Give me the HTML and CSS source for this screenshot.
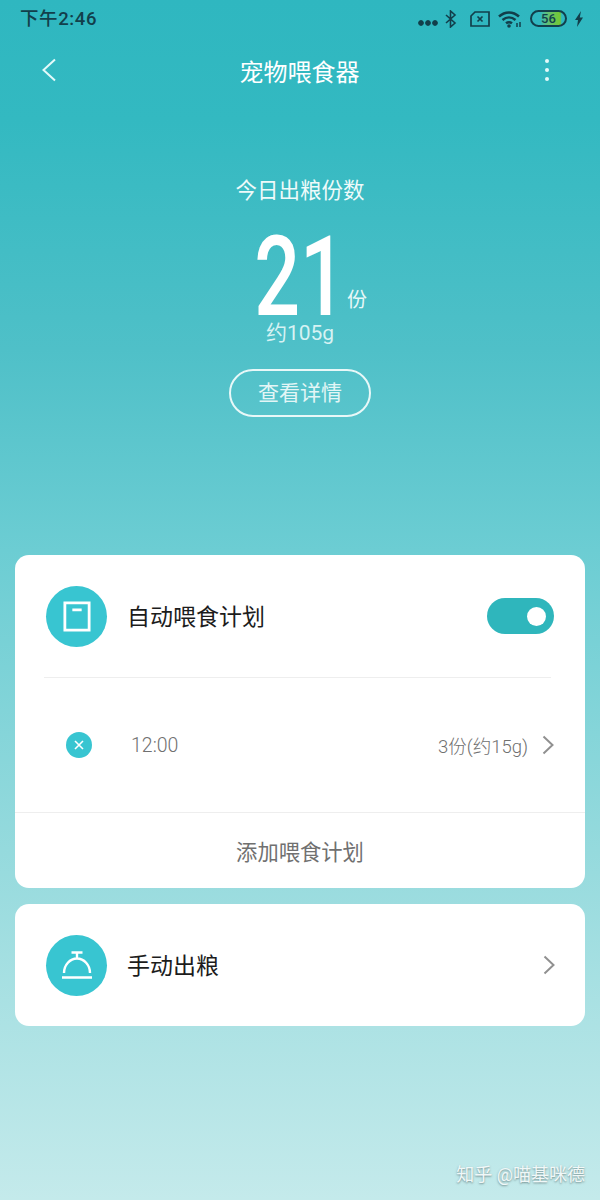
FILE: index.html
```html
<!DOCTYPE html>
<html>
<head>
<meta charset="UTF-8">
<title>宠物喂食器</title>
<link rel="stylesheet" href="styles.css">
</head>
<body>
	<div class="page">
		<div class="status">
			<span class="status-time">下午2:46</span>
			<div class="status-icons">
				<svg class="ic-dots" viewBox="0 0 20 6"><circle cx="3" cy="3" r="2.400"/><circle cx="10" cy="3" r="2.400"/><circle cx="17" cy="3" r="2.400"/></svg>
				<svg class="ic-bt" viewBox="0 0 12 18"><path d="M1 5l9 8-4.500 4V1L10 5l-9 8" fill="none" stroke-width="1.600"/></svg>
				<svg class="ic-sim" viewBox="0 0 20 16"><path d="M5 1h14v14H1V5z M7.500 5.500l5 5 M12.500 5.500l-5 5" fill="none" stroke-width="1.700"/></svg>
				<svg class="ic-wifi" viewBox="0 0 24 18"><path d="M1 6.500C7 1 15 1 21 6.500M4.500 10C8.500 6.500 13.500 6.500 17.500 10M8 13.300c2-1.500 4-1.500 6 0" fill="none" stroke-width="2.500"/><circle cx="11" cy="16" r="1.800" stroke="none"/><path d="M19 13v4M22 12v5" fill="none" stroke-width="1.500"/></svg>
				<div class="battery"><span class="battery-num">56</span></div>
				<svg class="ic-bolt" viewBox="0 0 10 16"><path d="M7 0L1 9h3l-1 7 6-9.500H5.800z" stroke="none"/></svg>
			</div>
		</div>

		<div class="nav">
			<svg class="nav-back" viewBox="0 0 16 24"><path d="M14 1.500L2.500 12 14 22.500"/></svg>
			<h1 class="nav-title">宠物喂食器</h1>
			<div class="nav-more"><i></i><i></i><i></i></div>
		</div>

		<div class="hero">
			<p class="hero-title">今日出粮份数</p>
			<div class="hero-count">
				<span class="hero-num">21</span>
				<span class="hero-unit">份</span>
			</div>
			<p class="hero-weight">约105g</p>
			<a class="hero-btn">查看详情</a>
		</div>

		<div class="card">
			<div class="row-main row-plan">
				<div class="round-icon">
					<svg viewBox="0 0 30 32"><path d="M2 1.500h26v29H2z M10 9h10" fill="none" stroke="#fff" stroke-width="3"/></svg>
				</div>
				<span class="row-title">自动喂食计划</span>
				<div class="switch"><div class="switch-knob"></div></div>
			</div>
			<div class="row-item">
				<div class="del-icon">
					<svg viewBox="0 0 12 12"><path d="M2 2l8 8M10 2l-8 8" stroke="#fff" stroke-width="1.600" fill="none"/></svg>
				</div>
				<span class="item-time">12:00</span>
				<span class="item-amount">3份(约15g)</span>
				<svg class="chevron" viewBox="0 0 12 20"><path d="M1.500 1.500L10.500 10 1.500 18.500"/></svg>
			</div>
			<div class="row-add">添加喂食计划</div>
		</div>

		<div class="card card-manual">
			<div class="row-main">
				<div class="round-icon">
					<svg class="ic-bell" viewBox="0 0 32 28"><path d="M10.500 1.500h11M16 1.500v6M3 22C3 14 9 7.500 16 7.500S29 14 29 22M1 26.500h30" fill="none" stroke="#fff" stroke-width="2.400"/></svg>
				</div>
				<span class="row-title">手动出粮</span>
				<svg class="chevron chevron-manual" viewBox="0 0 12 20"><path d="M1.500 1.500L10.500 10 1.500 18.500"/></svg>
			</div>
		</div>

		<div class="watermark">知乎 @喵基咪德</div>
	</div>
</body>
</html>
```

FILE: styles.css
```css
* {
	box-sizing: border-box;
}

html, body {
	margin: 0;
	padding: 0;
}

body {
	font-family: Roboto, "Noto Sans CJK SC", sans-serif;
}

.page {
	position: relative;
	width: 600px;
	height: 1200px;
	overflow: hidden;
	padding: 0 15px;
	background: linear-gradient(180deg, #2fb7c0 0, #33b9c1 120px, #4fc0c8 350px, #6ccdd3 550px, #95dadd 850px, #c4eaeb 1200px);
}

/*状态栏*/
.status {
	display: flex;
	justify-content: space-between;
	align-items: center;
	height: 34px;
	margin: 0 -15px;
	padding: 0 16px 0 20px;
	color: #123f4b;
}

.status-time {
	font-size: 18.500px;
	font-weight: 500;
	letter-spacing: .6px;
}

.status-icons {
	display: flex;
	align-items: center;
	padding-top: 3px;
}

.status-icons svg {
	display: block;
	fill: #123f4b;
	stroke: #123f4b;
}

.ic-dots {
	width: 20px;
	height: 6px;
	margin: 8px 7px 0 0;
}

.ic-bt {
	width: 12px;
	height: 18px;
	margin-right: 13px;
}

.ic-sim {
	width: 20px;
	height: 16px;
	margin-right: 8px;
}

.ic-wifi {
	width: 24px;
	height: 18px;
	margin-right: 8px;
}

.battery {
	position: relative;
	width: 37px;
	height: 17px;
	border: 2px solid #123f4b;
	border-radius: 9px;
	margin-right: 7px;
	background: linear-gradient(90deg, transparent 25%, #5fbf7a 45%, #74c832 85%, transparent 90%);
}

.battery-num {
	position: absolute;
	left: 0;
	right: 0;
	top: -2px;
	text-align: center;
	font-size: 13px;
	line-height: 17px;
	font-weight: 500;
}

.ic-bolt {
	width: 10px;
	height: 16px;
}

/*标题栏*/
.nav {
	display: flex;
	justify-content: space-between;
	align-items: center;
	height: 72px;
	margin: 0 -15px;
	padding: 0 51px 0 41px;
	color: #fff;
}

.nav-back {
	width: 16px;
	height: 24px;
	fill: none;
	stroke: #e4fafa;
	stroke-width: 2;
}

.nav-title {
	margin: 0 0 0 -3px;
	font-size: 24px;
	font-weight: 400;
}

.nav-more i {
	display: block;
	width: 4px;
	height: 4px;
	margin: 5px 0;
	border-radius: 50%;
	background: #e4fafa;
}

/*今日份数*/
.hero {
	display: flex;
	flex-direction: column;
	align-items: center;
	height: 449px;
	padding-top: 70px;
	color: #fff;
}

.hero p {
	margin: 0;
}

.hero-title {
	font-size: 21.500px;
	line-height: 30px;
	color: #eefafa;
}

.hero-count {
	display: grid;
	grid-template-columns: 1fr 80px 1fr;
	align-items: end;
	width: 100%;
	height: 90px;
	margin-top: 26px;
}

.hero-num {
	grid-column: 2;
	display: flex;
	justify-content: center;
	font-size: 112px;
	font-weight: 500;
	line-height: 90px;
	transform: scaleX(.72);
}

.hero-unit {
	grid-column: 3;
	margin: 0 0 10px 7px;
	font-size: 20px;
	line-height: 24px;
	color: #e8f8f8;
}

.hero-weight {
	margin-top: -1px !important;
	font-size: 21px;
	line-height: 24px;
	color: #d6f2f3;
}

.hero-btn {
	width: 142px;
	height: 48px;
	margin-top: 24px;
	border: 2px solid #e8f8f8;
	border-radius: 24px;
	text-align: center;
	font-size: 21px;
	line-height: 45px;
	color: #e3f6f6;
}

/*卡片*/
.card {
	background: #fff;
	border-radius: 14px;
	margin-bottom: 16px;
}

.row-main {
	display: flex;
	align-items: center;
	height: 122px;
	padding: 0 31px 0 31px;
}

.row-plan {
	height: 123px;
	padding-bottom: 1px;
	position: relative;
}

.row-plan::after {
	content: "";
	position: absolute;
	left: 29px;
	right: 34px;
	bottom: 0;
	height: 1px;
	background: #eeeeee;
}

.round-icon {
	display: flex;
	align-items: center;
	justify-content: center;
	width: 61px;
	height: 61px;
	border-radius: 50%;
	background: #38c5d1;
}

.round-icon svg {
	width: 28px;
	height: 31px;
}

.round-icon .ic-bell {
	width: 32px;
	height: 28px;
}

.row-title {
	flex: 1;
	margin: 0 0 2px 20px;
	font-size: 23px;
	color: #1c1c1c;
}

.switch {
	position: relative;
	width: 67px;
	height: 36px;
	border-radius: 18px;
	background: #2fb6bc;
}

.switch-knob {
	position: absolute;
	right: 8px;
	top: 9px;
	width: 19px;
	height: 19px;
	border-radius: 50%;
	background: #fff;
}

.row-item {
	display: flex;
	align-items: center;
	height: 135px;
	padding: 0 31px 0 51px;
	border-bottom: 1px solid #eeeeee;
}

.del-icon {
	display: flex;
	align-items: center;
	justify-content: center;
	width: 26px;
	height: 26px;
	border-radius: 50%;
	background: #38c5d1;
}

.del-icon svg {
	width: 12px;
	height: 12px;
}

.item-time {
	flex: 1;
	margin-left: 39px;
	font-size: 19.500px;
	font-weight: 300;
	color: #707070;
}

.item-amount {
	margin-right: 14px;
	font-size: 18.500px;
	font-weight: 300;
	color: #707070;
}

.chevron {
	width: 12px;
	height: 20px;
	fill: none;
	stroke: #909090;
	stroke-width: 2;
}

.chevron-manual {
	margin-right: -1px;
}

.row-add {
	height: 75px;
	text-align: center;
	font-size: 21.300px;
	line-height: 79px;
	color: #707070;
}

/*水印*/
.watermark {
	position: absolute;
	right: 15px;
	top: 1163px;
	font-size: 18px;
	line-height: 24px;
	color: #f0f8f8;
	text-shadow: 0 1px 2px rgba(80, 100, 100, .7);
}
```
